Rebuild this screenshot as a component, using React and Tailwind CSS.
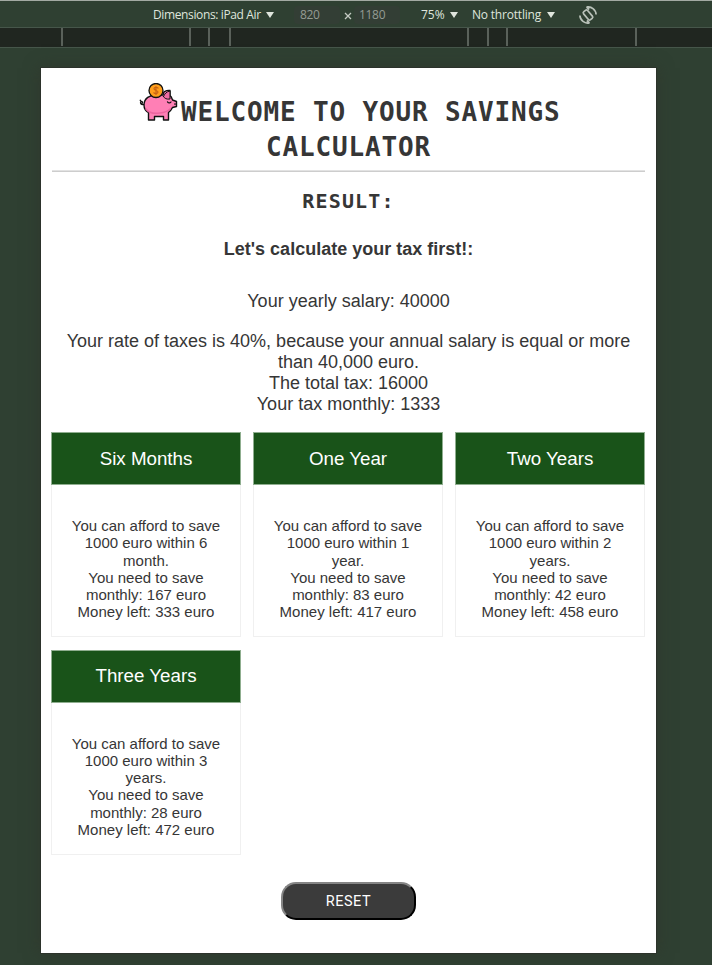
const plans = [
  { title: "Six Months", lines: ["You can afford to save", "1000 euro within 6", "month.", "You need to save", "monthly: 167 euro", "Money left: 333 euro"] },
  { title: "One Year", lines: ["You can afford to save", "1000 euro within 1", "year.", "You need to save", "monthly: 83 euro", "Money left: 417 euro"] },
  { title: "Two Years", lines: ["You can afford to save", "1000 euro within 2", "years.", "You need to save", "monthly: 42 euro", "Money left: 458 euro"] },
  { title: "Three Years", lines: ["You can afford to save", "1000 euro within 3", "years.", "You need to save", "monthly: 28 euro", "Money left: 472 euro"] },
];

function Caret() {
  return (
    <svg width="8" height="6" viewBox="0 0 8 6" className="shrink-0">
      <path d="M0 0h8L4 6z" fill="#dfe5dd" />
    </svg>
  );
}

function RotateIcon() {
  return (
    <svg width="18" height="18" viewBox="0 0 18 18" fill="none" stroke="#b9c1b9" strokeWidth="1.7">
      <rect x="6.400" y="3.800" width="5.200" height="10.400" rx="1.500" transform="rotate(-40 9 9)" />
      <path d="M.9 9.500A8.100 8.100 0 0 0 10.500 17M7.800 14.500l2.700 2.300M17.100 8.500A8.100 8.100 0 0 0 7.500 1M10.200 3.500L7.500 1.200" />
    </svg>
  );
}

function PiggyBank() {
  return (
    <svg width="40" height="40" viewBox="0 0 40 40" strokeLinejoin="round" strokeLinecap="round" className="mt-px">
      <path d="M4.500 21.500C2 22 .8 20 2 18.800c1.300-1 2.300.8.8 1.800M1.200 17.200l.6 1" fill="none" stroke="#111" strokeWidth="1.300" />
      <path d="M5 22c0-7 6-10 12-10h7l1-3c1-1 4-2 6-1.500v5c1.500 1 2 3 2.500 4.500l4 1.500v5l-4 1c-1 2-2.500 4-4 5v7.500h-5v-3.500h-9v3.500h-6v-7.500C6.500 28 5 26 5 22z" fill="#ff7fb5" stroke="#111" strokeWidth="1.400" />
      <path d="M7 26c3 4 8 5 14 4 5-.5 8-2 10-4" fill="none" stroke="#ec669f" strokeWidth="1.500" />
      <path d="M24.500 13.500c1-2.500 3-5 6.500-5.500v8c-3.500.5-5.500-.5-6.500-2.500z" fill="#f06ba4" stroke="#111" strokeWidth="1" />
      <path d="M28.500 18.800c1 1.500 2.500 1.500 3.500.2M36 20.500v1" fill="none" stroke="#111" strokeWidth="1.200" />
      <circle cx="17" cy="7.500" r="7" fill="#ff9f1c" stroke="#111" strokeWidth="1.300" />
      <path d="M19 5c-1.500-1.300-4-.8-4 .8 0 2 4 1.300 4 3.300 0 1.600-2.700 2-4.200.7M17 3.500v8" fill="none" stroke="#c86414" strokeWidth="1.200" />
    </svg>
  );
}

function Tick({ space }) {
  return <div className={`${space} h-[18px] w-[2px] shrink-0 bg-[#5a615a]`} />;
}

function PlanCard({ plan }) {
  return (
    <div className="flex h-[205px] w-[190px] flex-col">
      <div className="flex h-[53px] shrink-0 items-center justify-center border border-[#8fae8f] bg-[#195319] pt-[1px] text-[18.75px] text-white">
        {plan.title}
      </div>
      <div className="flex-1 border border-t-0 border-[#f0f0f0] pt-[32px] text-[15px] leading-[17.25px] text-[#363636]">
        {plan.lines.map((line) => (
          <div key={line} className="whitespace-nowrap">{line}</div>
        ))}
      </div>
    </div>
  );
}

export default function App() {
  return (
    <div className="flex h-[965px] w-[712px] flex-col overflow-hidden bg-[#2f4032] font-['Liberation_Sans',Arial,sans-serif]">
      <div className="flex h-[28px] shrink-0 items-center border-b border-t border-b-[#46564a] border-t-[#a3aaa3] pl-[153px] pt-[2px] font-['Open_Sans','Noto_Sans',sans-serif] text-[12px] text-[#dfe5dd]">
        <div className="flex w-[141px] items-center gap-[6px] whitespace-nowrap">
          <span className="w-[107px] tracking-[-0.37px]">Dimensions: iPad Air</span><Caret />
        </div>
        <div className="flex h-[18px] w-[46px] items-center rounded bg-[#333e35] pl-[6px] tracking-[-0.3px] text-[#939b93]">820</div>
        <div className="flex w-[14px] items-center pl-[4px] pt-[2px]">
          <svg width="8" height="8" viewBox="0 0 8 8" stroke="#c4cbc3" strokeWidth="1.3"><path d="M1 1l6 6M7 1L1 7" /></svg>
        </div>
        <div className="flex h-[18px] w-[46px] items-center rounded bg-[#333e35] pl-[5px] tracking-[-0.3px] text-[#939b93]">1180</div>
        <div className="ml-[21px] flex w-[51px] items-center whitespace-nowrap"><span className="w-[29px]">75%</span><Caret /></div>
        <div className="flex w-[107px] items-center whitespace-nowrap"><span className="w-[75px] tracking-[-0.2px]">No throttling</span><Caret /></div>
        <RotateIcon />
      </div>
      <div className="flex h-[20px] shrink-0 border-b border-[#46564a] bg-[#202620]">
        <Tick space="ml-[61px]" />
        <Tick space="ml-[126px]" />
        <Tick space="ml-[17px]" />
        <Tick space="ml-[19px]" />
        <Tick space="ml-[236px]" />
        <Tick space="ml-[18px]" />
        <Tick space="ml-[17px]" />
        <Tick space="ml-[127px]" />
      </div>
      <main className="ml-[41px] mt-[20px] flex h-[885px] w-[615px] shrink-0 flex-col bg-white text-center text-[#363636] shadow-[0_0_16px_rgba(48,48,40,0.6),0_0_0_1px_#2c352d]">
        <h1 className="mx-[11px] flex h-[103px] flex-col border-b border-[#e2e2e2] pt-[14px] font-['DejaVu_Sans_Mono',monospace] text-[26px] font-bold leading-[35px] tracking-[0.85px]">
          <span className="flex h-[48px] pl-[87px]">
            <PiggyBank />
            <span className="whitespace-nowrap pl-[2px] pt-[13px]">WELCOME TO YOUR SAVINGS</span>
          </span>
          <span>CALCULATOR</span>
        </h1>
        <h2 className="mx-[11px] h-[61px] border-t border-[#cdcdcd] pt-[14px] font-['DejaVu_Sans_Mono',monospace] text-[20px] font-bold leading-[30px] tracking-[1.15px]">RESULT:</h2>
        <h3 className="h-[58px] pt-[7px] text-[18px] font-bold leading-[21px]">Let&apos;s calculate your tax first!:</h3>
        <p className="h-[40px] pt-[1px] text-[18px] leading-[21px]">Your yearly salary: 40000</p>
        <div className="h-[102px] pt-[1px] text-[18px] leading-[21px]">
          <div className="whitespace-nowrap">Your rate of taxes is 40%, because your annual salary is equal or more</div>
          <div>than 40,000 euro.</div>
          <div>The total tax: 16000</div>
          <div>Your tax monthly: 1333</div>
        </div>
        <section className="ml-[10px] grid grid-cols-[190px_190px_190px] gap-x-[12px] gap-y-[12.5px]">
          {plans.map((plan) => <PlanCard key={plan.title} plan={plan} />)}
        </section>
        <button className="ml-[240px] mt-[27.5px] h-[38px] w-[135px] rounded-[15px] border-2 border-b-black border-l-[#858585] border-r-black border-t-[#858585] bg-[#3b3b3b] pt-[2px] font-[Roboto,sans-serif] text-[14.5px] tracking-[0.5px] text-white">
          RESET
        </button>
      </main>
    </div>
  );
}
